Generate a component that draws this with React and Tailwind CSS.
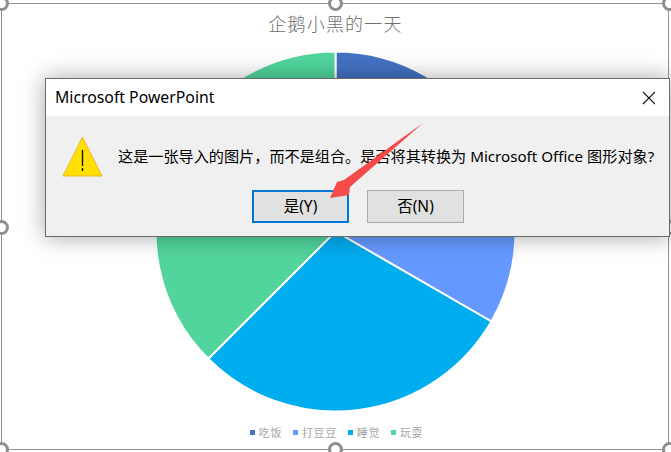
const cjk = { fontFamily: '"Noto Sans","Noto Sans CJK SC",sans-serif' };

const CX = 181.5;
const CY = 181.5;
const R = 180;
function polar(a) {
  const t = (a * Math.PI) / 180;
  return [CX + R * Math.sin(t), CY - R * Math.cos(t)];
}
function Slice({ from, to, fill }) {
  const [x1, y1] = polar(from);
  const [x2, y2] = polar(to);
  const large = to - from > 180 ? 1 : 0;
  return <path d={`M${CX} ${CY}L${x1} ${y1}A${R} ${R} 0 ${large} 1 ${x2} ${y2}Z`} fill={fill} stroke="#fff" strokeWidth="2" />;
}
function Pie() {
  return (
    <svg width="364" height="364" viewBox="0 0 364 364" className="block shrink-0">
      <Slice from={0} to={60} fill="#4472c4" />
      <Slice from={60} to={120} fill="#6699ff" />
      <Slice from={120} to={225} fill="#00adef" />
      <Slice from={225} to={360} fill="#51d59c" />
    </svg>
  );
}
function Handle({ className }) {
  return <div className={`absolute w-[15px] h-[15px] rounded-full bg-white border-[3px] border-[#8f8f8f] ${className}`} />;
}
function LegendItem({ color, label }) {
  return (
    <div className="flex items-center gap-[4px]">
      <span className={`w-[5px] h-[5px] ${color}`} />
      <span>{label}</span>
    </div>
  );
}
export default function App() {
  return (
    <div className="relative w-[671px] h-[452px] bg-white overflow-hidden" style={cjk}>
      <div className="absolute left-[1px] top-[3px] w-[668px] h-[447px] border border-[#929292]" />
      <div className="relative flex flex-col items-center h-full">
        <div className="h-[50px] shrink-0 pt-[12px] text-[18px] leading-[25px] tracking-[1.2px] font-light text-[#6e6e6e]">企鹅小黑的一天</div>
        <Pie />
        <div className="flex gap-[11px] mt-[10px] ml-[2px] text-[11px] leading-[17px] tracking-[0.6px] text-[#a6a6a6]">
          <LegendItem color="bg-[#4472c4]" label="吃饭" />
          <LegendItem color="bg-[#6699ff]" label="打豆豆" />
          <LegendItem color="bg-[#00adef]" label="睡觉" />
          <LegendItem color="bg-[#51d59c]" label="玩耍" />
        </div>
      </div>
      <Handle className="left-[-6px] top-[-4px]" />
      <Handle className="left-[328px] top-[-4px]" />
      <Handle className="left-[662px] top-[-4px]" />
      <Handle className="left-[-6px] top-[220px]" />
      <Handle className="left-[662px] top-[220px]" />
      <Handle className="left-[-6px] top-[442px]" />
      <Handle className="left-[328px] top-[442px]" />
      <Handle className="left-[662px] top-[442px]" />

      <div className="absolute left-[45px] top-[78px] w-[625px] h-[159px] flex flex-col border border-[#6b6b6b] bg-[#f0f0f0] shadow-[0_0_22px_rgba(0,0,0,0.35)]">
        <div className="h-[37px] shrink-0 bg-white flex items-center justify-between pl-[9px] pr-[14px] text-[15.8px] text-black">
          <span>Microsoft PowerPoint</span>
          <svg width="14" height="14" viewBox="0 0 14 14"><path d="M2 1L14 13M14 1L2 13" stroke="#111" strokeWidth="1.1" fill="none" /></svg>
        </div>
        <div className="flex items-center gap-[15px] pl-[16px] mt-[20px] h-[40px]">
          <svg width="41" height="41" viewBox="0 0 41 41" className="shrink-0">
            <path d="M20.5 1L40 40H1Z" fill="#ffe000" stroke="#eeb634" strokeWidth="1" />
            <path d="M20.5 14V30M20.5 32V35" stroke="#111" strokeWidth="1.4" />
          </svg>
          <span className="text-[15.15px] whitespace-nowrap text-black">这是一张导入的图片，而不是组合。是否将其转换为 Microsoft Office 图形对象?</span>
        </div>
        <div className="flex gap-[18px] pl-[206px] mt-[14px]">
          <button className="w-[97px] h-[33px] bg-[#e1e1e1] border-2 border-[#0078d7] text-[15.5px] text-black">是(Y)</button>
          <button className="w-[97px] h-[33px] bg-[#e1e1e1] border border-[#adadad] text-[15.5px] text-black">否(N)</button>
        </div>
      </div>

      <svg className="absolute left-0 top-0 pointer-events-none" width="671" height="452">
        <path d="M423 123L350 187L349 195L330 198L337 182L344 180Z" fill="#f44a4a" />
      </svg>
    </div>
  );
}
